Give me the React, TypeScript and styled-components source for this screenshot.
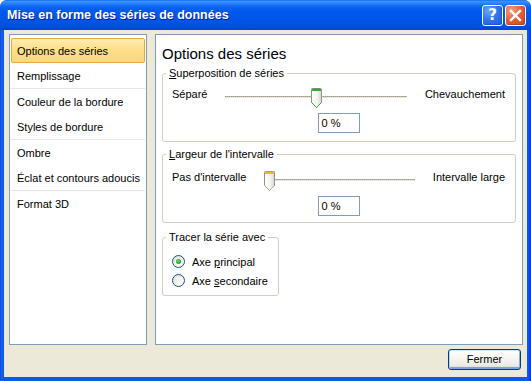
import React from "react";
import styled, { createGlobalStyle } from "styled-components";

const Global = createGlobalStyle`
  html, body { margin: 0; padding: 0; background: #ffffff; }
  body { font-family: "Liberation Sans", Arial, sans-serif; font-size: 11px; color: #000; }
  * { box-sizing: border-box; }
`;

const Window = styled.div`
  width: 531px;
  height: 381px;
  display: flex;
  flex-direction: column;
  background: linear-gradient(to right, #0831d9 0px, #166aee 1px, #0d5ae8 3px, #0d5ae8 calc(100% - 3px), #0831d9 100%);
  border-radius: 7px 7px 0 0;
  overflow: hidden;
`;

const TitleBar = styled.div`
  height: 30px;
  flex: none;
  display: flex;
  align-items: center;
  padding: 0 5px 0 7px;
  background: linear-gradient(
    to bottom,
    #0a5ce8 0px,
    #3d95ff 1px,
    #2b86ff 3px,
    #0a63f0 7px,
    #0058ee 12px,
    #0055e7 20px,
    #0050e0 26px,
    #0046d6 29px,
    #003dc9 30px
  );
`;

const Title = styled.div`
  flex: 1;
  color: #ffffff;
  font-family: "Liberation Sans", Arial, sans-serif;
  font-weight: bold;
  font-size: 12.5px;
  text-shadow: 1px 1px 0 #0a1e90;
  padding-bottom: 1px;
`;

const CaptionButtons = styled.div`
  display: flex;
  gap: 2px;
`;

const CaptionButton = styled.div<{ $kind: "help" | "close" }>`
  width: 21px;
  height: 21px;
  border: 1px solid #ffffff;
  border-radius: 3px;
  display: flex;
  align-items: center;
  justify-content: center;
  color: #ffffff;
  font-family: "DejaVu Sans", sans-serif;
  font-weight: bold;
  font-size: 15px;
  background: ${(p) =>
    p.$kind === "help"
      ? "radial-gradient(circle at 30% 25%, #6aa6ff 0%, #2f72ef 50%, #1d56dd 100%)"
      : "radial-gradient(circle at 30% 25%, #f4a184 0%, #e35d36 50%, #cc4420 100%)"};
  box-shadow: inset -1px -1px 0 rgba(0, 0, 0, 0.15);
`;

const Body = styled.div`
  flex: 1;
  margin: 0 0 4px 4px;
  width: 523px;
  background: #ece9d8;
  display: flex;
  flex-direction: column;
  padding: 4px 4px 0 5px;
`;

const Main = styled.div`
  height: 311px;
  display: flex;
  gap: 8px;
`;

const Nav = styled.div`
  width: 138px;
  flex: none;
  background: #ffffff;
  border: 1px solid #7f9db9;
  padding: 3px 1px 1px 1px;
  display: flex;
  flex-direction: column;
`;

const NavItem = styled.div<{ $selected?: boolean }>`
  height: 25px;
  display: flex;
  align-items: center;
  padding-left: 5px;
  border: 1px solid ${(p) => (p.$selected ? "#e4a93c" : "transparent")};
  border-radius: 2px;
  background: ${(p) =>
    p.$selected ? "linear-gradient(to bottom, #ffeeb2 0%, #fde08f 40%, #fcd77a 100%)" : "transparent"};
  white-space: nowrap;
`;

const NavSeparator = styled.div`
  height: 1px;
  background: #e3e7ee;
`;

const Content = styled.div`
  flex: 1;
  background: #ffffff;
  border: 1px solid #7f9db9;
  padding: 10px 6px 0 6px;
  display: flex;
  flex-direction: column;
`;

const Heading = styled.div`
  font-size: 15px;
  line-height: 18px;
  height: 18px;
`;

const Group = styled.fieldset<{ $top: number; $pt: number; $pb: number; $width?: number }>`
  margin: ${(p) => p.$top}px 0 0 0;
  border: 1px solid #d0d0bf;
  border-radius: 3px;
  padding: ${(p) => p.$pt}px 10px ${(p) => p.$pb}px 9px;
  min-width: 0;
  ${(p) => (p.$width ? `width: ${p.$width}px;` : "")}
  display: flex;
  flex-direction: column;
`;

const Legend = styled.legend`
  margin-left: -6px;
  padding: 0 3px;
  line-height: 13px;
  font-size: 11px;
  white-space: nowrap;
`;

const U = styled.span`
  text-decoration: underline;
  text-underline-offset: 1px;
`;

const SliderRow = styled.div`
  height: 20px;
  display: flex;
  gap: 18px;
  align-items: flex-start;
`;

const SliderLabel = styled.div`
  line-height: 11px;
  margin-top: 1px;
  white-space: nowrap;
`;

const Track = styled.div`
  flex: 1;
  position: relative;
  height: 20px;
  &::before {
    content: "";
    position: absolute;
    left: 0;
    right: 0;
    top: 8px;
    height: 1px;
    background: repeating-linear-gradient(to right, #9c9b97 0px, #9c9b97 1px, #b7b5ad 1px, #b7b5ad 2px);
  }
  &::after {
    content: "";
    position: absolute;
    left: 0;
    right: 0;
    top: 9px;
    height: 1px;
    background: #ebe8d8;
  }
`;

const ThumbWrap = styled.div`
  position: absolute;
  top: 0;
  width: 11px;
  height: 20px;
  z-index: 1;
`;

const ValueBox = styled.div`
  align-self: center;
  margin-top: 5px;
  width: 42px;
  height: 20px;
  border: 1px solid #7f9db9;
  background: #ffffff;
  padding-left: 3px;
  display: flex;
  align-items: center;
  line-height: 13px;
`;

const RadioRow = styled.div`
  height: 19px;
  display: flex;
  align-items: center;
  gap: 7px;
  white-space: nowrap;
`;

const RadioCircle = styled.div<{ $checked?: boolean }>`
  width: 13px;
  height: 13px;
  border-radius: 50%;
  border: 1px solid #1c5180;
  background: radial-gradient(circle at 65% 70%, #ffffff 0%, #f3f3ef 40%, #d9d9d2 100%);
  display: flex;
  align-items: center;
  justify-content: center;
  &::after {
    content: "";
    display: ${(p) => (p.$checked ? "block" : "none")};
    width: 5px;
    height: 5px;
    border-radius: 50%;
    background: radial-gradient(circle at 40% 40%, #7be07b 0%, #2fb22f 45%, #1f8f1f 100%);
  }
`;

const Footer = styled.div`
  height: 32px;
  display: flex;
  justify-content: flex-end;
  align-items: flex-start;
  padding: 4px 2px 0 0;
`;

const Button = styled.div`
  width: 73px;
  height: 21px;
  border: 1px solid #003c74;
  border-radius: 3px;
  background: linear-gradient(to bottom, #ffffff 0%, #f6f6f2 40%, #ecebe4 80%, #d8d4c8 100%);
  box-shadow: inset 0 1px 0 #cee7ff, inset 1px 0 0 #bcd4f6, inset -1px 0 0 #89ade4, inset 0 -2px 0 #7ba2e7;
  display: flex;
  align-items: center;
  justify-content: center;
  font-size: 11px;
  padding-bottom: 1px;
`;

const Thumb: React.FC<{ accent: string; tip: string }> = ({ accent, tip }) => (
  <svg width="11" height="20" viewBox="0 0 11 20">
    <defs>
      <linearGradient id={`tg${accent.slice(1)}`} x1="0" y1="0" x2="1" y2="0">
        <stop offset="0" stopColor="#ffffff" />
        <stop offset="0.6" stopColor="#f2f2ee" />
        <stop offset="1" stopColor="#d6d5ce" />
      </linearGradient>
    </defs>
    <path
      d="M0.5 1.5 Q0.5 0.5 1.5 0.5 H9.5 Q10.5 0.5 10.5 1.5 V14.5 L5.5 19.5 L0.5 14.5 Z"
      fill={`url(#tg${accent.slice(1)})`}
      stroke="#8e8f8f"
    />
    <path d="M0.5 14.5 L5.5 19.5 L10.5 14.5" fill="none" stroke={tip} />
    <rect x="1" y="1" width="9" height="2" fill={accent} />
    <rect x="1.5" y="0.5" width="8" height="1" fill={accent} opacity="0.8" />
  </svg>
);

const Slider: React.FC<{ left: string; right: string; value: number; accent: string; tip: string }> = ({
  left,
  right,
  value,
  accent,
  tip,
}) => (
  <SliderRow>
    <SliderLabel>{left}</SliderLabel>
    <Track>
      <ThumbWrap style={{ left: `calc((100% - 11px) * ${value})` }}>
        <Thumb accent={accent} tip={tip} />
      </ThumbWrap>
    </Track>
    <SliderLabel>{right}</SliderLabel>
  </SliderRow>
);

const CloseIcon = () => (
  <svg width="13" height="13" viewBox="0 0 13 13">
    <path d="M2 2 L11 11 M11 2 L2 11" stroke="#ffffff" strokeWidth="2.4" strokeLinecap="square" />
  </svg>
);

export default function App() {
  return (
    <>
      <Global />
      <Window>
        <TitleBar>
          <Title>Mise en forme des séries de données</Title>
          <CaptionButtons>
            <CaptionButton $kind="help">?</CaptionButton>
            <CaptionButton $kind="close">
              <CloseIcon />
            </CaptionButton>
          </CaptionButtons>
        </TitleBar>
        <Body>
          <Main>
            <Nav>
              <NavItem $selected>Options des séries</NavItem>
              <NavItem>Remplissage</NavItem>
              <NavSeparator />
              <NavItem>Couleur de la bordure</NavItem>
              <NavItem>Styles de bordure</NavItem>
              <NavSeparator />
              <NavItem>Ombre</NavItem>
              <NavItem>Éclat et contours adoucis</NavItem>
              <NavSeparator />
              <NavItem>Format 3D</NavItem>
            </Nav>
            <Content>
              <Heading>Options des séries</Heading>
              <Group $top={4} $pt={8} $pb={8}>
                <Legend>
                  <U>S</U>uperposition de séries
                </Legend>
                <Slider left="Séparé" right="Chevauchement" value={0.5} accent="#3aa53a" tip="#3aa53a" />
                <ValueBox>0 %</ValueBox>
              </Group>
              <Group $top={6} $pt={10} $pb={6}>
                <Legend>
                  <U>L</U>argeur de l'intervalle
                </Legend>
                <Slider left="Pas d'intervalle" right="Intervalle large" value={0} accent="#f4b43c" tip="#b0a890" />
                <ValueBox>0 %</ValueBox>
              </Group>
              <Group $top={8} $pt={8} $pb={5} $width={117}>
                <Legend>Tracer la série avec</Legend>
                <RadioRow>
                  <RadioCircle $checked />
                  <span>
                    Axe <U>p</U>rincipal
                  </span>
                </RadioRow>
                <RadioRow>
                  <RadioCircle />
                  <span>
                    Axe <U>s</U>econdaire
                  </span>
                </RadioRow>
              </Group>
            </Content>
          </Main>
          <Footer>
            <Button>Fermer</Button>
          </Footer>
        </Body>
      </Window>
    </>
  );
}
